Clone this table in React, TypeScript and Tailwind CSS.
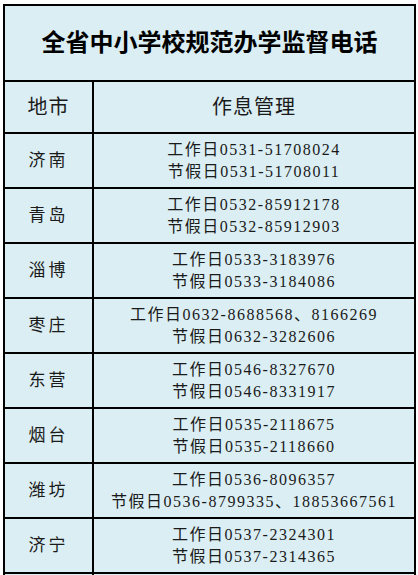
import React from 'react';

type Row = { city: string; lines: string[] };

const rows: Row[] = [
  { city: '济南', lines: ['工作日0531-51708024', '节假日0531-51708011'] },
  { city: '青岛', lines: ['工作日0532-85912178', '节假日0532-85912903'] },
  { city: '淄博', lines: ['工作日0533-3183976', '节假日0533-3184086'] },
  { city: '枣庄', lines: ['工作日0632-8688568、8166269', '节假日0632-3282606'] },
  { city: '东营', lines: ['工作日0546-8327670', '节假日0546-8331917'] },
  { city: '烟台', lines: ['工作日0535-2118675', '节假日0535-2118660'] },
  { city: '潍坊', lines: ['工作日0536-8096357', '节假日0536-8799335、18853667561'] },
  { city: '济宁', lines: ['工作日0537-2324301', '节假日0537-2314365'] },
];

const font = { fontFamily: '"Liberation Serif", "Noto Sans CJK SC", serif' };

const App: React.FC = () => {
  return (
    <div className="w-[418px] h-[575px] overflow-hidden bg-white pt-[4px] pl-[3px]" style={font}>
      <div className="w-[413px] border-2 border-black bg-[#daeef3] text-[#1a1a1a]">
        {/* title */}
        <div className="h-[76px] border-b-2 border-black flex items-center justify-center">
          <span className="text-[24px] font-bold text-black">全省中小学校规范办学监督电话</span>
        </div>

        {/* header */}
        <div className="flex h-[52px] border-b-2 border-black">
          <div className="w-[89px] border-r-2 border-black flex items-center justify-center text-[20px] tracking-[1px]">
            地市
          </div>
          <div className="flex-1 flex items-center justify-center text-[20px] tracking-[1px]">
            作息管理
          </div>
        </div>

        {rows.map(row => (
          <div key={row.city} className="flex h-[55px] border-b-2 border-black">
            <div className="w-[89px] border-r-2 border-black flex items-center justify-center text-[17px] tracking-[3px]">
              {row.city}
            </div>
            <div className="flex-1 flex flex-col items-center justify-center text-[16px] leading-[22px] tracking-[1.5px]">
              {row.lines.map(line => (
                <div key={line}>{line}</div>
              ))}
            </div>
          </div>
        ))}

        {/* next row, cut off by the window */}
        <div className="flex h-[55px]">
          <div className="w-[89px] border-r-2 border-black" />
          <div className="flex-1" />
        </div>
      </div>
    </div>
  );
};

export default App;
